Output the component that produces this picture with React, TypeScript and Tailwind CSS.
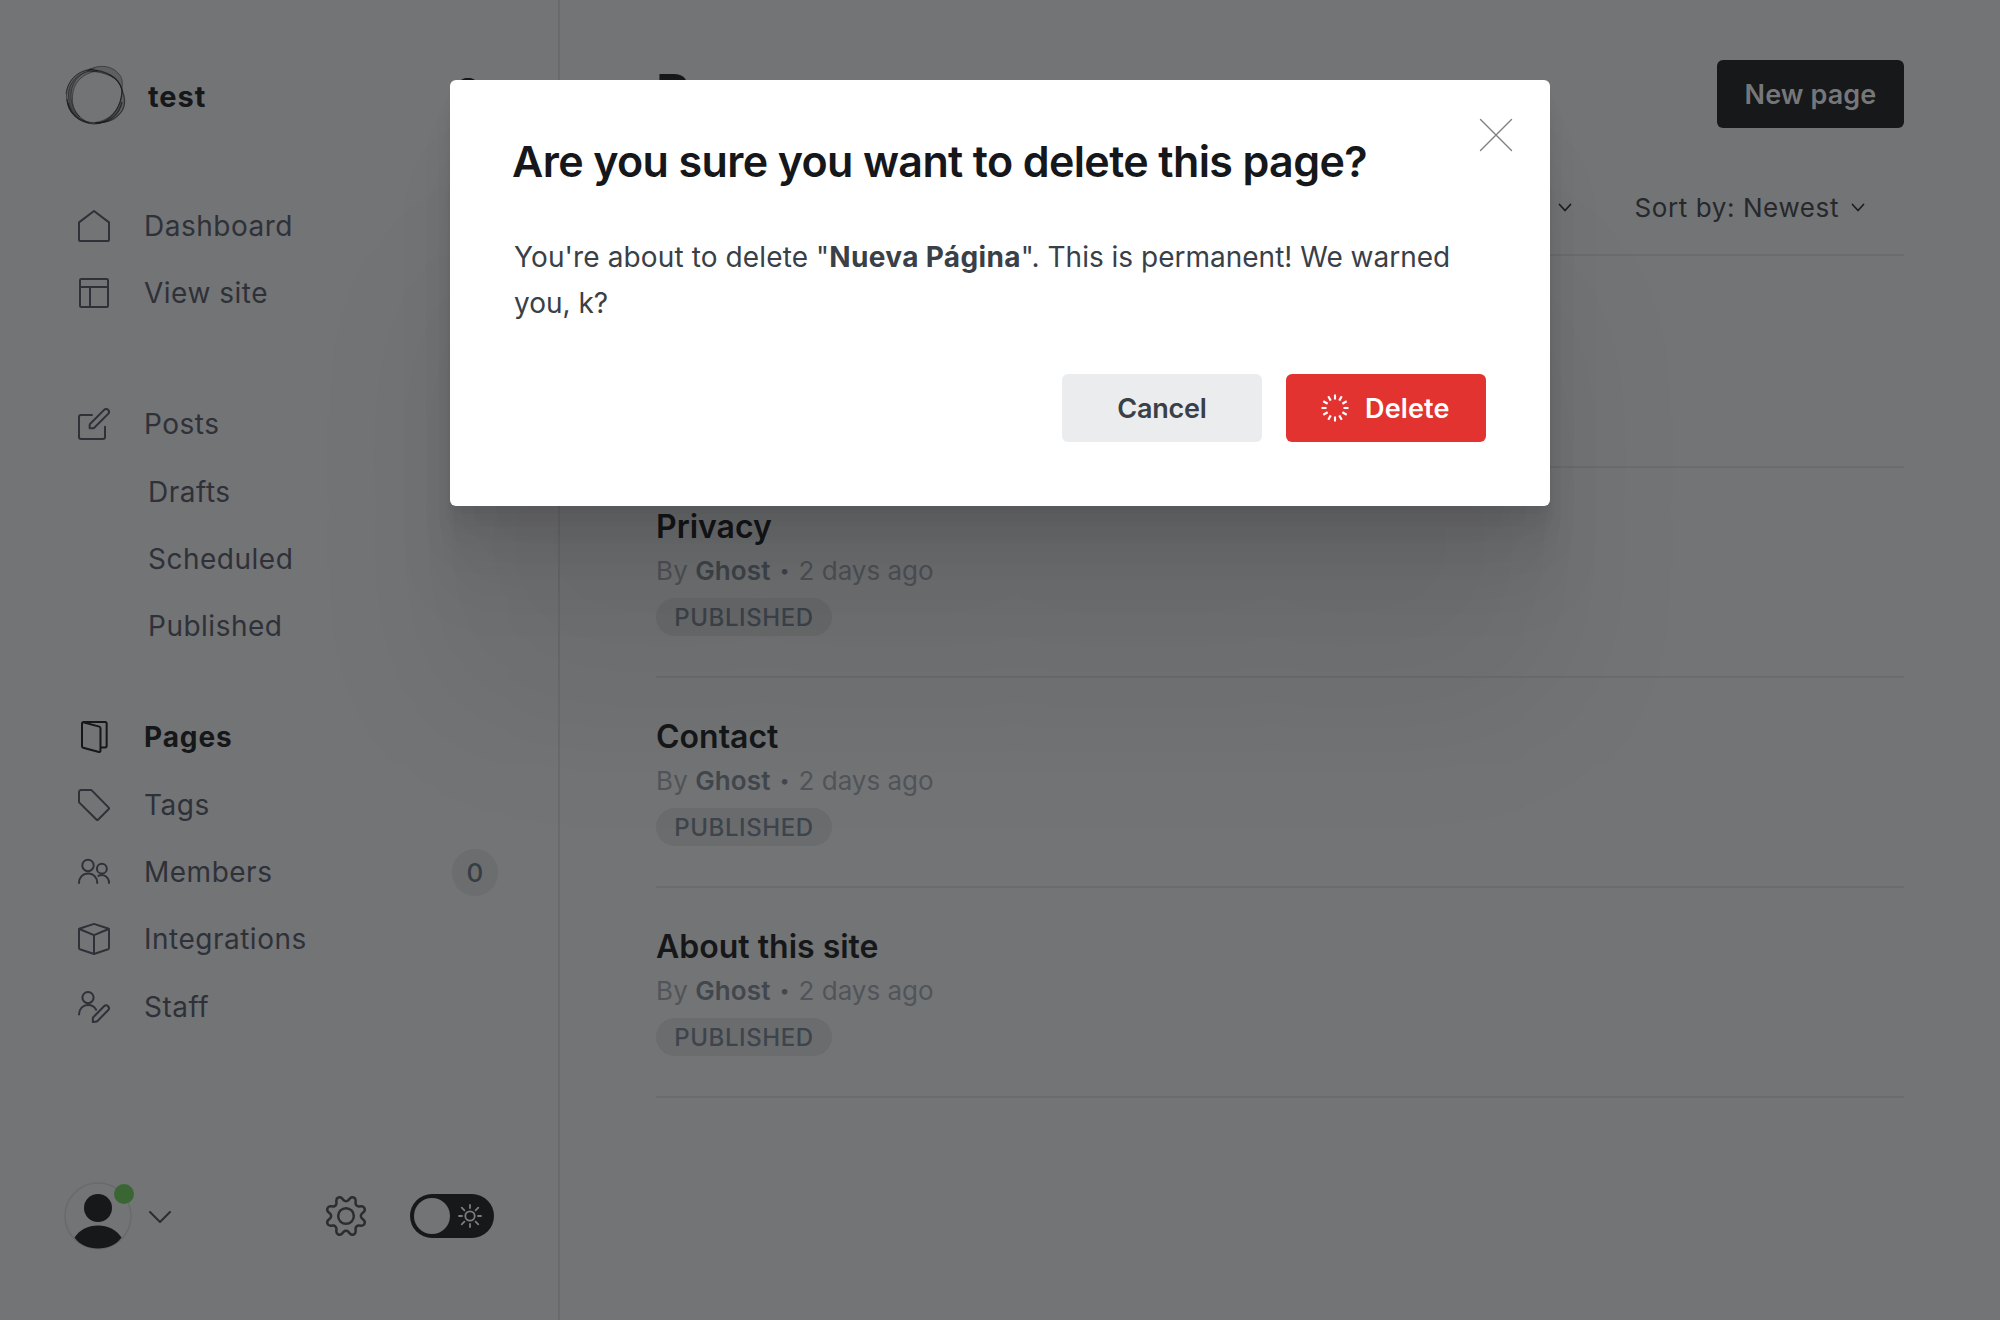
import type { ReactNode } from "react";

function Icon({ children }: { children: ReactNode }) {
  return (
    <svg viewBox="0 0 24 24" className="h-8 w-8 shrink-0" fill="none" stroke="currentColor" strokeWidth="1.5" strokeLinecap="round" strokeLinejoin="round">
      {children}
    </svg>
  );
}

const icons = {
  home: <path d="M12 .75 .75 9.3v13.2c0 .4.35.75.75.75h21c.4 0 .75-.35.75-.75V9.3z" />,
  layout: (
    <>
      <rect x="1.5" y="1.5" width="21" height="21" rx="1" />
      <path d="M1.5 7.5h21M9 7.5v15" />
    </>
  ),
  edit: (
    <>
      <path d="M10.5 5.25H2.25a1.5 1.5 0 0 0-1.5 1.5v15a1.5 1.5 0 0 0 1.5 1.5h16.5a1.5 1.5 0 0 0 1.5-1.5V14" />
      <path d="M8.75 15.25v-2.4c0-.4.15-.78.44-1.06L19.6 1.4a2.1 2.1 0 0 1 3 3L12.2 14.8c-.28.28-.66.44-1.06.44z" />
    </>
  ),
  pages: (
    <>
      <path d="M3.9.9 16 4.2c.5.15.85.6.85 1.1v17c0 .65-.5 1.1-1.1.95L3.85 20.1A1.15 1.15 0 0 1 3 19V1.9C3 1.3 3.4.75 4 .75h16.3c.65 0 1.2.5 1.2 1.2v16.7c0 .65-.5 1.2-1.2 1.2h-3.4" />
    </>
  ),
  tag: <path d="M.75 2.25v7.1c0 .4.16.8.44 1.07l12.8 12.6c.3.3.75.3 1.06 0l8-8c.3-.3.3-.77 0-1.06L10.5 1.2A1.5 1.5 0 0 0 9.4.75H2.25a1.5 1.5 0 0 0-1.5 1.5z" />,
  members: (
    <>
      <circle cx="7.5" cy="7.1" r="4.3" />
      <path d="M.75 20.25c0-4.2 2.9-7.2 6.85-7.2s6.85 3 6.85 7.2" />
      <circle cx="17.9" cy="9.5" r="3.7" />
      <path d="M15.3 14.9c4-2 7.95 1.1 7.95 5.35" />
    </>
  ),
  box: (
    <>
      <path d="M12.5.85 22.6 4.1c.4.15.65.5.65.9v13.8c0 .4-.25.75-.65.9L12.5 23.1c-.3.1-.7.1-1 0L1.4 19.7c-.4-.15-.65-.5-.65-.9V5c0-.4.25-.75.65-.9L11.5.85c.3-.1.7-.1 1 0z" />
      <path d="M1 4.5 12 9.1l11-4.6M12 9.1v14" />
    </>
  ),
  staff: (
    <>
      <circle cx="7.5" cy="4.95" r="4.2" />
      <path d="M.75 17.6c0-4.1 2.9-7.1 6.75-7.1 2.6 0 4.9 1.3 6.1 3.5" />
      <path d="M11.1 23.2v-2.4c0-.5.2-.95.53-1.3l7.9-8.1a2.1 2.1 0 0 1 3 3l-7.9 8.1c-.35.4-.85.6-1.35.6z" />
    </>
  ),
};

type NavItem = { label: string; icon?: keyof typeof icons; active?: boolean; count?: string };

const groups: { items: NavItem[]; gap: string }[] = [
  { gap: "mt-[65px]", items: [{ label: "Dashboard", icon: "home" }, { label: "View site", icon: "layout" }] },
  { gap: "mt-[64px]", items: [{ label: "Posts", icon: "edit" }, { label: "Drafts" }, { label: "Scheduled" }, { label: "Published" }] },
  {
    gap: "mt-[44px]",
    items: [
      { label: "Pages", icon: "pages", active: true },
      { label: "Tags", icon: "tag" },
      { label: "Members", icon: "members", count: "0" },
      { label: "Integrations", icon: "box" },
      { label: "Staff", icon: "staff" },
    ],
  },
];

function NavRow({ item }: { item: NavItem }) {
  const tone = item.active ? "font-bold text-[#161719] tracking-[0.9px]" : "text-[#2f3138] tracking-[0.5px]";
  return (
    <a className={`flex h-[67.3px] items-center pl-[78px] pr-[60px] text-[28px] ${tone}`}>
      {item.icon ? <Icon>{icons[item.icon]}</Icon> : <span className="w-[36px]" />}
      <span className="ml-[34px]">{item.label}</span>
      {item.count && (
        <span className="ml-auto flex h-[47px] w-[46px] items-center justify-center rounded-full bg-[#6c6d6f] text-[26px] font-medium tracking-normal text-[#363d44]">
          {item.count}
        </span>
      )}
    </a>
  );
}

function Logo() {
  return (
    <svg viewBox="0 0 62 62" className="h-[62px] w-[62px]" fill="none" stroke="#17181a">
      <g fill="#17181a" fillOpacity=".22" strokeWidth=".8" strokeOpacity=".6">
        <path d="M22 6C32-1 46 0 53 8c6 6 4 11 4 17C55 14 44 9 32 7c-4-.5-7-1-10-1z" />
        <path d="M57 25c4 12 3 20-5 27-6 5-14 6-22 5.500C46 55 56 44 57 25z" />
        <path d="M27 4.500C12 9 5.500 19 6 33c1 12 8 20 18 25C9 55 1 44 1.500 29 2 16 12 6 27 4.500z" />
        <path d="M33 6C17 8 8 18 7.500 32 7 41 10 47 15 52 7 47 3 39 3.500 29 4 15 16 5 33 6z" />
      </g>
      <g strokeOpacity=".7">
        <path strokeWidth="1.500" d="M3 38c3 12 14 20 28 20 13 0 23-8 26-21" />
        <path strokeWidth="1.200" d="M26 5c14 0 28 7 31 20 0 18-12 33-28 34C14 58 3 48 2 34" />
        <path strokeWidth=".8" d="M24 4c14 3 29 6 33 21 5 10 3 20-4 25-6 6-14 8-22 8" />
        <path strokeWidth=".8" d="M30 4C14 4 3 14 1 29" />
      </g>
    </svg>
  );
}

function SmallChevron() {
  return (
    <svg viewBox="0 0 14 10" className="h-[10px] w-[14px]" fill="none" stroke="#1c1e21" strokeWidth="1.700" strokeLinecap="round" strokeLinejoin="round">
      <path d="m1.500 1.500 5.500 6 5.500-6" />
    </svg>
  );
}

function Sidebar() {
  return (
    <aside className="flex h-full w-[560px] shrink-0 flex-col border-r-2 border-[#6a6b6d]">
      <div className="mt-[65px] flex h-[62px] items-center pl-[65px] pr-[72px]">
        <Logo />
        <span className="ml-[21px] pt-[2px] text-[29px] font-bold tracking-[1px] text-[#161719]">test</span>
        <svg viewBox="0 0 24 24" className="mb-1 ml-auto h-8 w-8" fill="none" stroke="#161719" strokeWidth="2.400" strokeLinecap="round">
          <circle cx="10.500" cy="9" r="8" />
          <path d="m17 17 6 6" />
        </svg>
      </div>
      <nav>
        {groups.map((g, i) => (
          <div key={i} className={g.gap}>
            {g.items.map((item) => (
              <NavRow key={item.label} item={item} />
            ))}
          </div>
        ))}
      </nav>
      <div className="mb-[70px] mt-auto flex h-[68px] items-center pl-[64px]">
        <div className="relative h-[68px] w-[68px]">
          <svg viewBox="0 0 68 68" className="h-[68px] w-[68px]">
            <circle cx="34" cy="34" r="33" fill="none" stroke="#696a6c" strokeWidth="1.500" />
            <circle cx="34" cy="26" r="14" fill="#17181a" />
            <path d="M10.500 55.500C16 47.500 24 43.500 34 43.500s18 4 23.500 12C52 63 44 66.500 34 66.500s-18-3.500-23.500-11z" fill="#17181a" />
          </svg>
          <span className="absolute left-[50px] top-[2px] h-5 w-5 rounded-full bg-[#3a6634]" />
        </div>
        <svg viewBox="0 0 24 14" className="ml-4 mt-[2px] h-[14px] w-6" fill="none" stroke="#2b2d31" strokeWidth="2" strokeLinecap="round" strokeLinejoin="round">
          <path d="m2 2 10 10L22 2" />
        </svg>
        <svg viewBox="0 0 24 24" className="ml-[154px] h-10 w-10" fill="none" stroke="#2b2d31" strokeWidth="1.500" strokeLinecap="round" strokeLinejoin="round">
          <circle cx="12" cy="12" r="4.700" />
          <path d="M10.546 2.438a1.957 1.957 0 0 0 2.908 0L14.4 1.400a1.959 1.959 0 0 1 3.410 1.413l-.071 1.400a1.958 1.958 0 0 0 2.051 2.054l1.400-.071a1.959 1.959 0 0 1 1.410 3.410l-1.042.940a1.960 1.960 0 0 0 0 2.909l1.042.940a1.959 1.959 0 0 1-1.413 3.410l-1.400-.071a1.958 1.958 0 0 0-2.056 2.056l.071 1.400A1.959 1.959 0 0 1 14.400 22.600l-.941-1.041a1.959 1.959 0 0 0-2.908 0L9.606 22.600A1.959 1.959 0 0 1 6.200 21.192l.072-1.400a1.958 1.958 0 0 0-2.056-2.056l-1.400.071A1.958 1.958 0 0 1 1.400 14.400l1.041-.940a1.960 1.960 0 0 0 0-2.909L1.400 9.606A1.958 1.958 0 0 1 2.809 6.200l1.400.071a1.958 1.958 0 0 0 2.058-2.060L6.200 2.810A1.959 1.959 0 0 1 9.606 1.400z" />
        </svg>
        <div className="ml-11 flex h-11 w-[84px] items-center rounded-full bg-[#17181a] pl-1">
          <span className="h-9 w-9 rounded-full bg-[#737476]" />
          <svg viewBox="0 0 24 24" className="ml-2 h-6 w-6" fill="none" stroke="#7c7d7f" strokeWidth="1.800" strokeLinecap="round">
            <circle cx="12" cy="12" r="4.700" />
            <path d="M12 1v3M12 20v3M1 12h3M20 12h3M3.700 3.700l2.700 2.700M17.600 17.600l2.700 2.700M3.700 20.300l2.700-2.700M17.600 6.400l2.700-2.700" />
          </svg>
        </div>
      </div>
    </aside>
  );
}

function PageRow({ title }: { title: string }) {
  return (
    <li className="h-[210px] border-b-2 border-[#6b6c6e] pt-[40px]">
      <h3 className="h-[38px] text-[32px] leading-[38px] font-semibold text-[#161719]">{title}</h3>
      <p className="mt-[7px] flex h-[36px] items-center text-[26px] leading-[36px] text-[#515459]">
        <span className="tracking-[0.3px]">By</span>
        <span className="ml-[7px] font-semibold tracking-[0.1px] text-[#41474d]">Ghost</span>
        <span className="ml-[9px] mr-[9px] text-[18px] text-[#41474d]">•</span>
        <span>2 days ago</span>
      </p>
      <span className="mt-[9px] flex h-[38px] w-[176px] items-center justify-center rounded-full bg-[#6b6c6e] pt-[2px] text-[24px] font-medium tracking-[0.6px] text-[#3d444c]">
        PUBLISHED
      </span>
    </li>
  );
}

function Content() {
  return (
    <main className="flex-1 pl-[96px] pr-[96px] pt-[60px]">
      <header className="flex h-[68px] items-center justify-between">
        <h2 className="text-[52px] font-bold text-[#161719]">Pages</h2>
        <button className="h-[68px] w-[187px] rounded-md bg-[#17181a] pt-[2px] text-[27px] font-semibold tracking-[0.1px] text-[#767779]">New page</button>
      </header>
      <div className="flex h-[128px] items-center justify-end border-b-2 border-[#6b6c6e] pr-[39px] pt-[33px] text-[26px] tracking-[0.6px] text-[#26282b]">
        <SmallChevron />
        <div className="ml-[62px] flex h-[48px] items-center gap-3">Sort by: Newest <SmallChevron /></div>
      </div>
      <ul>
        <li className="h-[212px] border-b-2 border-[#6b6c6e]" />
        <PageRow title="Privacy" />
        <PageRow title="Contact" />
        <PageRow title="About this site" />
      </ul>
    </main>
  );
}

const spokes = [0, 30, 60, 90, 120, 150, 180, 210, 240, 270, 300, 330];

function DeleteDialog() {
  return (
    <div className="absolute left-[450px] top-[80px] h-[426px] w-[1100px] rounded-md bg-white px-16 pt-[55px] shadow-[0_5.6px_4.4px_rgba(0,0,0,0.02),0_13.4px_10.6px_rgba(0,0,0,0.028),0_25px_20px_rgba(0,0,0,0.035),0_44.6px_35.8px_rgba(0,0,0,0.042),0_83.6px_66.8px_rgba(0,0,0,0.05),0_200px_160px_rgba(0,0,0,0.07)]">
      <svg viewBox="0 0 34 34" className="absolute right-[37px] top-[38px] h-[34px] w-[34px]" fill="none" stroke="#7f8183" strokeWidth="1.400" strokeLinecap="round">
        <path d="m1.500 1.500 31 31M32.500 1.500l-31 31" />
      </svg>
      <h1 className="-ml-[2px] h-[52px] whitespace-nowrap text-[43px] leading-[52px] font-semibold tracking-[-0.630px] text-[#15171a]">Are you sure you want to delete this page?</h1>
      <p className="mt-[47px] text-[28px] leading-[46px] text-[#394047]">
        <span className="tracking-[0.120px]">You're about to delete "</span>
        <strong className="font-bold tracking-[0.350px]">Nueva Página</strong>". This is permanent! We warned you, k?
      </p>
      <div className="mt-12 flex justify-end gap-6">
        <button className="h-[68px] w-[200px] rounded-md bg-[#ebeced] pt-[2px] text-[27px] font-semibold tracking-[-0.2px] text-[#394047]">Cancel</button>
        <button className="flex h-[68px] w-[200px] items-center rounded-md bg-[#e23330] pl-[35px] text-[27px] font-semibold text-white">
          <svg viewBox="0 0 28 28" className="mr-[16px] h-7 w-7" stroke="#fff" strokeWidth="2.100">
            {spokes.map((a) => (
              <path key={a} d="M14 .500v5" transform={`rotate(${a} 14 14)`} />
            ))}
          </svg>
          <span className="pt-[2px] tracking-[0.150px]">Delete</span>
        </button>
      </div>
    </div>
  );
}

export default function App() {
  return (
    <div className="relative flex h-[1320px] w-[2000px] overflow-hidden bg-[#737476] font-['Inter',sans-serif]">
      <Sidebar />
      <Content />
      <DeleteDialog />
    </div>
  );
}
